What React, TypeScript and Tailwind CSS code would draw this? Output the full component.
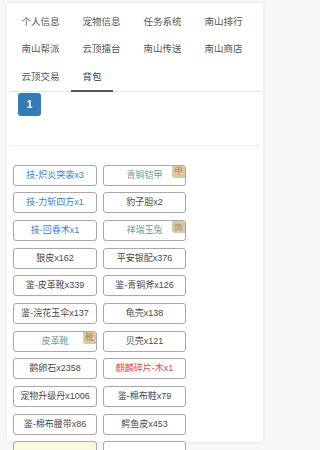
const tabs = ['个人信息', '宠物信息', '任务系统', '南山排行', '南山帮派', '云顶擂台', '南山传送', '南山商店', '云顶交易', '背包']

type Item = { name: string; tone?: 'skill' | 'equip' | 'rare'; badge?: string; bg?: string }

const items: Item[] = [
  { name: '技-炽炎突袭x3', tone: 'skill' },
  { name: '青铜铠甲', tone: 'equip', badge: '甲' },
  { name: '技-力斩四方x1', tone: 'skill' },
  { name: '豹子胆x2' },
  { name: '技-回春术x1', tone: 'skill' },
  { name: '祥瑞玉兔', tone: 'equip', badge: '饰' },
  { name: '狼皮x162' },
  { name: '平安银配x376' },
  { name: '鉴-皮革靴x339' },
  { name: '鉴-青铜斧x126' },
  { name: '鉴-浣花玉伞x137' },
  { name: '龟壳x138' },
  { name: '皮革靴', tone: 'equip', badge: '靴' },
  { name: '贝壳x121' },
  { name: '鹅卵石x2358' },
  { name: '麒麟碎片-木x1', tone: 'rare' },
  { name: '宠物升级丹x1006' },
  { name: '鉴-棉布鞋x79' },
  { name: '鉴-棉布腰带x86' },
  { name: '鳄鱼皮x453' },
  { name: '', bg: 'yellow' },
  { name: '' },
]

const toneClass = (tone?: Item['tone']) => {
  if (tone === 'skill') return 'text-[#3f7fd4]'
  if (tone === 'equip') return 'text-[#6b9c8e]'
  if (tone === 'rare') return 'text-[#e24c4c]'
  return 'text-[#4a4a4a]'
}

const ItemButton = ({ item }: { item: Item }) => (
  <div
    className={`relative flex h-[21px] items-center justify-center rounded-[3px] border border-[#a8a8a8] text-[9px] leading-none ${
      item.bg === 'yellow' ? 'bg-[#fbf9dc]' : 'bg-white'
    } ${toneClass(item.tone)}`}
  >
    {item.name}
    {item.badge && (
      <span className="absolute right-0 top-0 flex h-[12px] w-[13px] items-center justify-center rounded-bl-[3px] rounded-tr-[2px] bg-[#d9c9a7] text-[8.5px] leading-none text-[#b98527]">
        {item.badge}
      </span>
    )}
  </div>
)

export default function App() {
  return (
    <div
      className="min-h-screen bg-[#f7f7f7] px-[7px] pt-[3px]"
      style={{ fontFamily: '"Liberation Sans", "Noto Sans CJK SC", sans-serif' }}
    >
      <div className="h-[439px] w-[256px] bg-white px-[3px] pt-[5px] shadow-[0_0_4px_rgba(0,0,0,0.08)]">
        <div className="flex flex-wrap border-b border-[#e4e4e4]">
          {tabs.map((tab) => (
            <div
              key={tab}
              className={`-mb-px flex h-[28.5px] items-center border-b-2 px-[11.5px] text-[9.5px] leading-none ${
                tab === '背包' ? 'border-[#555555] text-[#333333]' : 'border-transparent text-[#555555]'
              }`}
            >
              {tab}
            </div>
          ))}
        </div>

        <div className="border-b border-[#eeeeee] pl-[8px] pt-[1px] pb-[29px]">
          <div className="flex h-[23px] w-[23px] items-center justify-center rounded-[3px] bg-[#337ab7] text-[10px] font-bold text-white">
            1
          </div>
        </div>

        <div className="grid grid-cols-[84px_83px] gap-x-[6px] gap-y-[6.7px] pl-[3px] pt-[19px]">
          {items.map((item, i) => (
            <ItemButton key={i} item={item} />
          ))}
        </div>
      </div>
    </div>
  )
}
